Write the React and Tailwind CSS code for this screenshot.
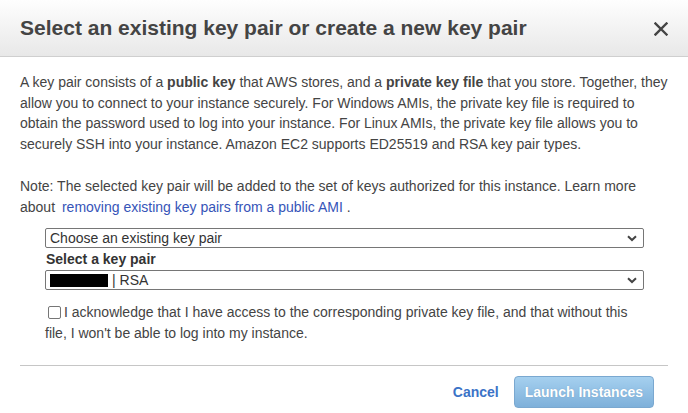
export default function App() {
  return (
    <div className="w-[688px] h-[413px] bg-white text-[#444] font-['Liberation_Sans',Arial,sans-serif]">
      <div className="h-[57px] flex items-center justify-between pl-5 pr-[20px] border-b border-[#cfcfcf] bg-gradient-to-b from-[#fefefe] to-[#e8e8e8]">
        <h2 className="text-[21px] font-bold text-[#444]">
          Select an existing key pair or create a new key pair
        </h2>
        <svg width="14" height="14" viewBox="0 0 14 14" className="mt-[1px]">
          <path d="M1.5 1.5 L12.5 12.5 M12.5 1.5 L1.5 12.5" stroke="#444" strokeWidth="2.4" strokeLinecap="square" />
        </svg>
      </div>

      <div className="px-5 pt-[15px] text-[14px] leading-[20.7px]">
        <p>
          A key pair consists of a <b>public key</b> that AWS stores, and a <b>private key file</b> that you store. Together, they
          allow you to connect to your instance securely. For Windows AMIs, the private key file is required to
          obtain the password used to log into your instance. For Linux AMIs, the private key file allows you to
          securely SSH into your instance. Amazon EC2 supports ED25519 and RSA key pair types.
        </p>

        <p className="mt-[21px]">
          Note: The selected key pair will be added to the set of keys authorized for this instance. Learn more
          about <span className="ml-[3px] text-[#3654b8]">removing existing key pairs from a public AMI</span> .
        </p>

        <div className="ml-[25px] w-[599px] mt-[11px]">
          <div className="h-[20px] flex items-center justify-between border border-[#767676] rounded-[2px] pl-[4px] pr-[6px] text-[#333]">
            <span>Choose an existing key pair</span>
            <Chevron />
          </div>
          <div className="font-bold text-[#333] mt-[1px] pl-[1px] leading-[21px]">Select a key pair</div>
          <div className="h-[20px] flex items-center justify-between border border-[#767676] rounded-[2px] pl-[4px] pr-[6px] text-[#333]">
            <span className="flex items-center">
              <span className="inline-block w-[58px] h-[13px] bg-black mr-[4px]" />
              | RSA
            </span>
            <Chevron />
          </div>

          <p className="mt-[12px] leading-[21px] pr-[10px]">
            <span className="inline-block w-[13px] h-[13px] border border-[#767676] rounded-[2px] ml-[3px] mr-[3px] align-[-2px] bg-white" />
            I acknowledge that I have access to the corresponding private key file, and that without this
            file, I won't be able to log into my instance.
          </p>
        </div>
      </div>

      <div className="mx-5 mt-[21px] border-t border-[#c6c6c6] flex items-center justify-end gap-[15px] pt-[10px] pr-[14px]">
        <span className="font-bold text-[14px] text-[#3b73c7]">Cancel</span>
        <button className="h-[32px] px-[10px] rounded-[4px] border border-[#7aa8d0] bg-gradient-to-b from-[#a5d0ef] to-[#7eb0da] text-white font-bold text-[14px] [text-shadow:0_0_1px_rgba(80,120,160,0.5)]">
          Launch Instances
        </button>
      </div>
    </div>
  );
}

function Chevron() {
  return (
    <svg width="10" height="7" viewBox="0 0 10 7">
      <path d="M1 1.2 L5 5 L9 1.2" fill="none" stroke="#444" strokeWidth="2" />
    </svg>
  );
}
